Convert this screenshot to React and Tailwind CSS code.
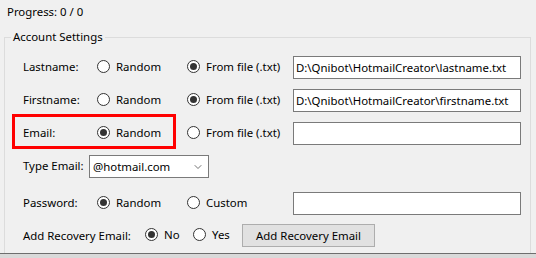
import { ChevronDown } from 'lucide-react';

function Radio({ checked, label, className = '' }) {
  return (
    <label className={`flex items-center gap-[6px] pb-[2px] ${className}`}>
      <span className="flex h-[13px] w-[13px] shrink-0 items-center justify-center rounded-full border border-[#333] bg-white">
        {checked && <span className="h-[7px] w-[7px] rounded-full bg-[#333]" />}
      </span>
      <span>{label}</span>
    </label>
  );
}

function TextBox({ value = '' }) {
  return (
    <div className="flex h-[23px] w-[228px] items-center overflow-hidden whitespace-nowrap border border-[#7a7a7a] bg-white px-[2px]">
      {value}
    </div>
  );
}

const ROWS = [
  { label: 'Lastname:', pick: 'file', value: 'D:\\Qnibot\\HotmailCreator\\lastname.txt' },
  { label: 'Firstname:', pick: 'file', value: 'D:\\Qnibot\\HotmailCreator\\firstname.txt' },
  { label: 'Email:', pick: 'random', value: '' },
];

export default function App() {
  return (
    <div className="relative h-[258px] w-[536px] overflow-hidden bg-[#f0f0f0] text-[11.4px] leading-[16px] text-black [font-family:'Noto_Sans',sans-serif]">
      <div className="h-[253px] overflow-hidden">
        <div className="pl-[7px] pt-[4px] h-[29px]">Progress: 0 / 0</div>
        <fieldset className="ml-[4px] w-[527px] border border-[#dcdcdc] pb-4">
          <legend className="ml-[6px] px-[2px]">Account Settings</legend>
          <div className="flex flex-col pl-[18px] pt-[11px]">
            {ROWS.map((r, i) => (
              <div key={r.label} className={`flex h-[23px] items-center ${i > 0 ? 'mt-[10px]' : ''}`}>
                <span className="w-[74px] pb-[2px]">{r.label}</span>
                <Radio className="w-[90px]" checked={r.pick === 'random'} label="Random" />
                <Radio className="w-[106px]" checked={r.pick === 'file'} label="From file (.txt)" />
                <TextBox value={r.value} />
              </div>
            ))}

            <div className="mt-[10px] flex h-[23px] items-center">
              <span className="w-[66px] pb-[1px]">Type Email:</span>
              <div className="flex h-[23px] w-[120px] items-center justify-between border border-[#7a7a7a] bg-white pl-[3px] pr-[4px]">
                <span>@hotmail.com</span>
                <ChevronDown size={12} strokeWidth={1.5} className="text-[#444]" />
              </div>
            </div>

            <div className="mt-[14px] flex h-[23px] items-center">
              <span className="w-[74px] pb-[2px]">Password:</span>
              <Radio className="w-[90px]" checked label="Random" />
              <Radio className="w-[106px]" label="Custom" />
              <TextBox />
            </div>

            <div className="mt-[9px] flex h-[23px] items-center">
              <span className="w-[122px]">Add Recovery Email:</span>
              <Radio className="w-[48px] pb-0" checked label="No" />
              <Radio className="w-[49px] pb-0" label="Yes" />
              <button className="h-[23px] w-[133px] border border-[#adadad] bg-[#e1e1e1]">
                Add Recovery Email
              </button>
            </div>
          </div>
        </fieldset>
      </div>
      <div className="h-[5px] border-t border-[#6e6e6e] bg-[#d9d9d9]" />

      <div className="absolute left-[12px] top-[114px] h-[35px] w-[164px] border-[3px] border-[#ff0000]" />
    </div>
  );
}
